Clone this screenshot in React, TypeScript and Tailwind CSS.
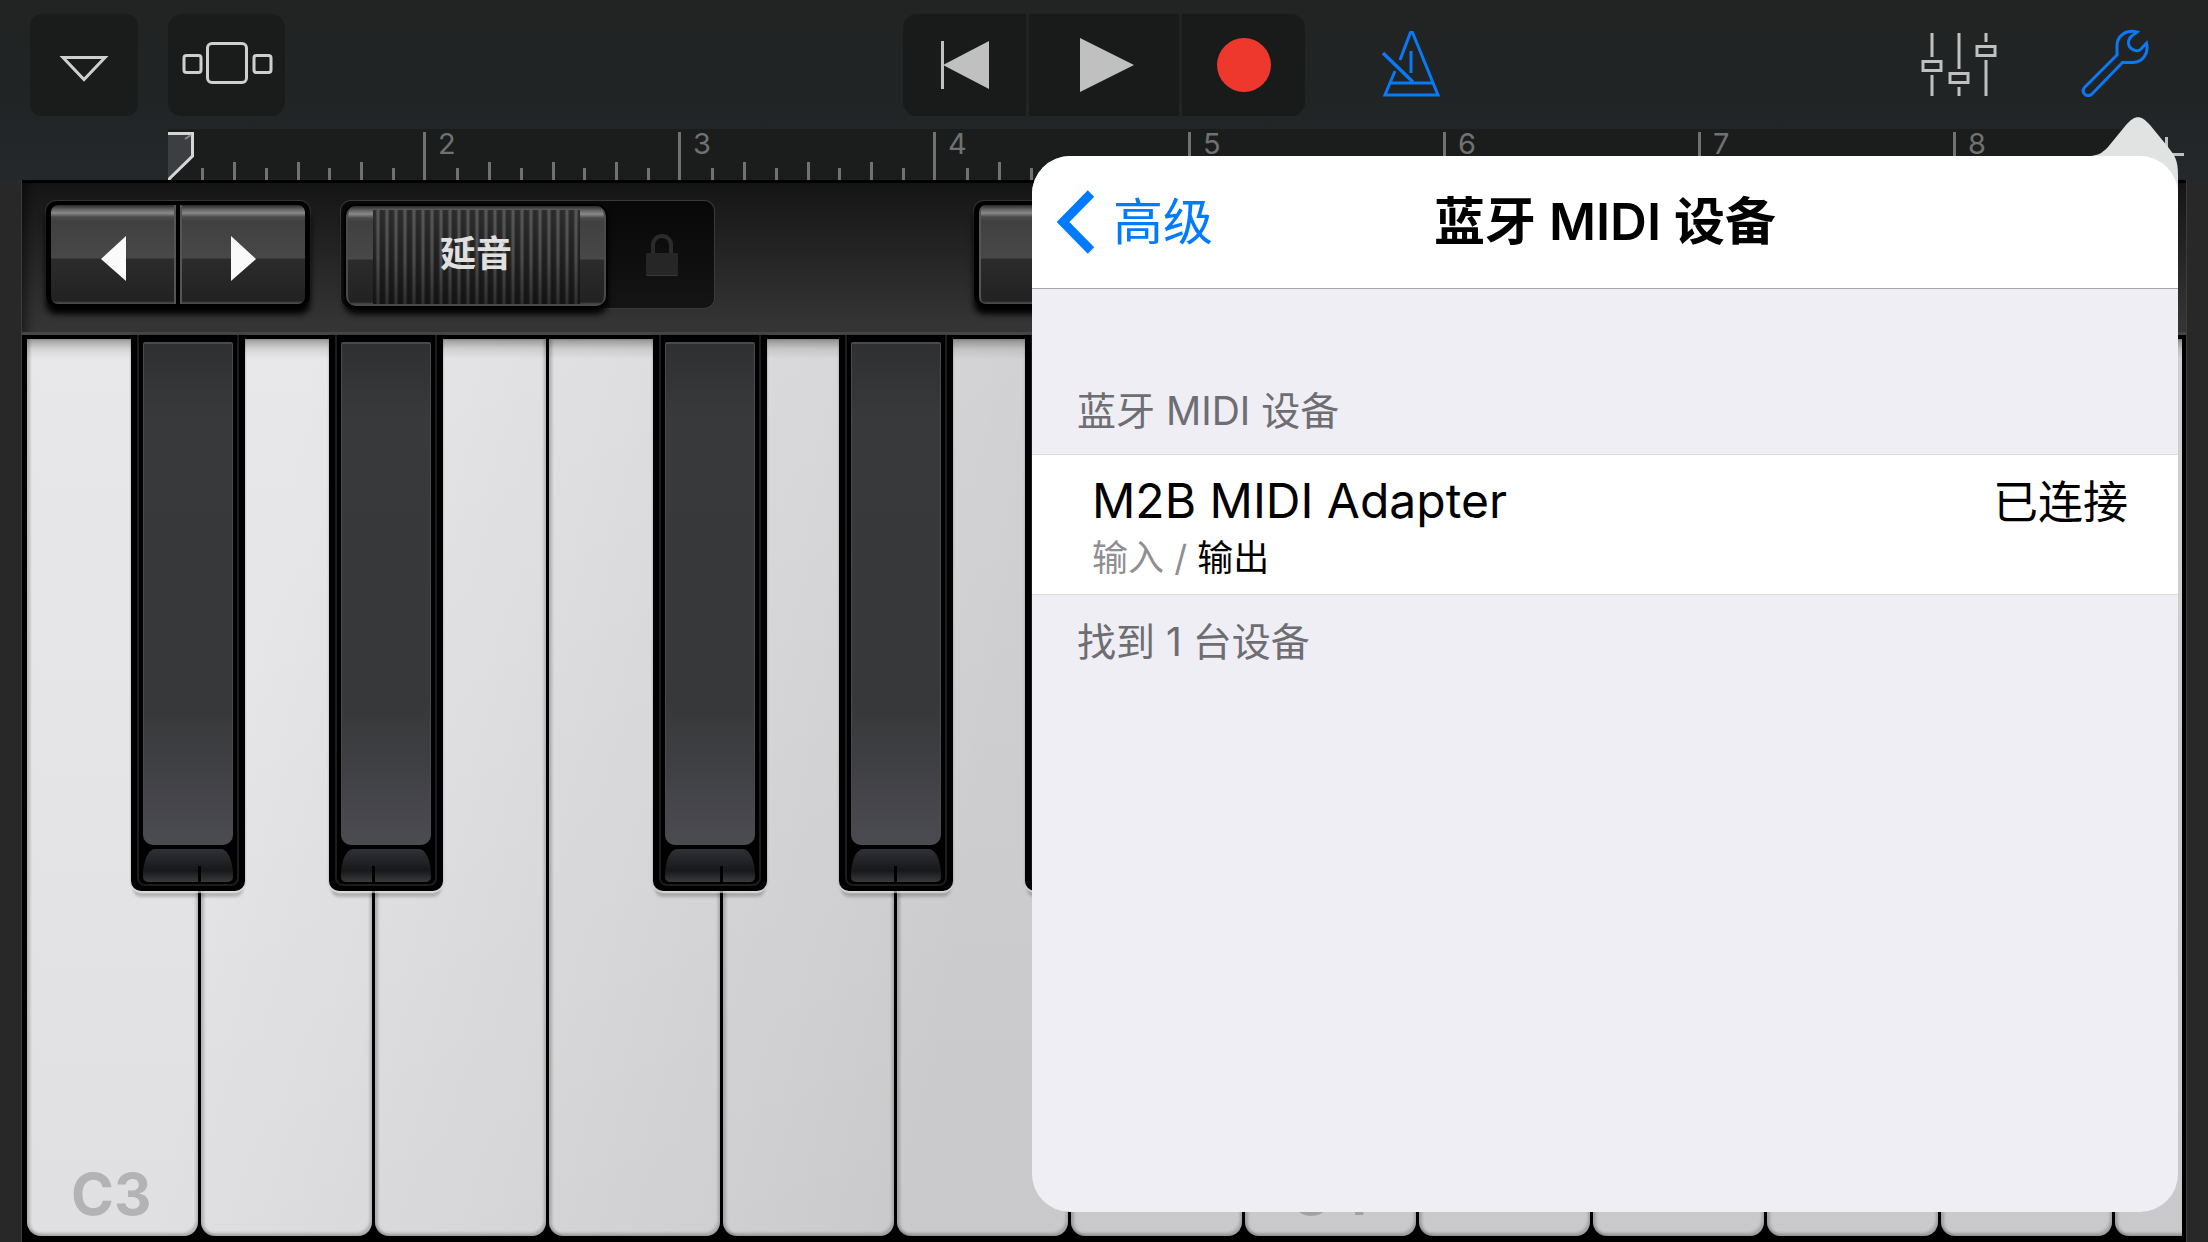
import React from "react";

const FONT = "font-['Inter','Noto_Sans_CJK_SC',sans-serif]";

type BlackKeySpec = { place: string; seam: string };
type KeySpec = { note: string; label?: string; black?: BlackKeySpec };

const LEFT_BLACK: BlackKeySpec = { place: "left-[104px]", seam: "left-[55px]" };
const MIDDLE_BLACK: BlackKeySpec = { place: "left-[116px]", seam: "left-[43px]" };
const RIGHT_BLACK: BlackKeySpec = { place: "left-[128px]", seam: "left-[31px]" };

const KEYS: KeySpec[] = [
  { note: "C3", label: "C3", black: LEFT_BLACK },
  { note: "D3", black: RIGHT_BLACK },
  { note: "E3" },
  { note: "F3", black: LEFT_BLACK },
  { note: "G3", black: MIDDLE_BLACK },
  { note: "A3", black: RIGHT_BLACK },
  { note: "B3" },
  { note: "C4", label: "C4", black: LEFT_BLACK },
  { note: "D4", black: RIGHT_BLACK },
  { note: "E4" },
  { note: "F4", black: LEFT_BLACK },
  { note: "G4", black: MIDDLE_BLACK },
  { note: "A4" },
];

const BARS = [1, 2, 3, 4, 5, 6, 7, 8];
const SUB_TICKS = [1, 2, 3, 4, 5, 6, 7];

function Toolbar() {
  return (
    <header className="grid h-[129px] grid-cols-[1fr_auto_1fr] items-start pt-[14px]">
      <div className="flex gap-[30px] pl-[30px]">
        <button aria-label="菜单" className="grid h-[102px] w-[108px] place-items-center rounded-[12px] bg-[#1a1c1b]">
          <svg width="50" height="28" viewBox="0 0 50 28" className="mt-2" fill="none" stroke="#cfcfcf" strokeWidth="3">
            <path d="M4 2.500H46L25 24.500Z" />
          </svg>
        </button>
        <button aria-label="浏览器" className="grid h-[102px] w-[117px] place-items-center rounded-[14px] bg-[#1a1c1b]">
          <svg width="91" height="42" viewBox="0 0 91 42" className="-mt-1 ml-px" fill="none" stroke="#cfcfcf" strokeWidth="3">
            <rect x="2" y="13.500" width="17" height="17" rx="2.500" />
            <rect x="25.500" y="1.500" width="39" height="39" rx="4.500" />
            <rect x="72" y="13.500" width="17" height="17" rx="2.500" />
          </svg>
        </button>
      </div>
      <div className="flex gap-[3px] overflow-hidden rounded-[14px]">
        <button aria-label="回到开头" className="grid h-[102px] w-[123px] place-items-center bg-[#191b1a]">
          <svg width="48" height="48" viewBox="0 0 48 48" fill="#c0c0c0">
            <rect width="3" height="48" />
            <path d="M48 0V48L2 24Z" />
          </svg>
        </button>
        <button aria-label="播放" className="grid h-[102px] w-[150px] place-items-center bg-[#191b1a] pl-[6px]">
          <svg width="54" height="54" viewBox="0 0 54 54" fill="#c0c0c0">
            <path d="M0 0V54L54 27Z" />
          </svg>
        </button>
        <button aria-label="录音" className="grid h-[102px] w-[123px] place-items-center bg-[#191b1a]">
          <span className="size-[54px] rounded-full bg-[#ee382e]" />
        </button>
      </div>
      <div className="flex justify-between pr-[59px] pl-[76px]">
        <button aria-label="节拍器" className="grid h-[102px] w-[60px] place-items-center">
          <svg width="60" height="68" viewBox="0 0 60 68" className="-mt-1" fill="none" stroke="#0a79f6" strokeWidth="3">
            <path d="M19 31L29.500 3.500H31.500L57 66H4L14 42" />
            <path d="M2 24L32 53" strokeWidth="3.500" />
            <path d="M30 22V44" />
            <path d="M10 54H51" />
          </svg>
        </button>
        <div className="flex gap-[84px]">
          <button aria-label="轨道控制" className="grid h-[102px] w-[76px] place-items-center">
            <svg width="76" height="64" viewBox="0 0 76 64" fill="none" stroke="#c0c0c0" strokeWidth="3">
              <path d="M11 0V24M11 42V63M38 0V36M38 54V63M65 0V9M65 27V63" />
              <rect x="2" y="28.500" width="18" height="9" />
              <rect x="29" y="40.500" width="18" height="9" />
              <rect x="56" y="13.500" width="18" height="9" />
            </svg>
          </button>
          <button aria-label="设置" className="grid h-[102px] w-[68px] place-items-center">
            <svg width="68" height="68" viewBox="0 0 68 68" className="-mt-1" fill="none" stroke="#0a79f6" strokeWidth="3">
              <path d="M56 3C45 0 35.500 7 36 18L36 26L3.500 58.500C-0.500 64 6 69 11 65L41.500 33.500H52C62 33 68 24 65.500 14L60 20C56 24 47 20 47.500 13C48 8 51 7 56 3Z" />
            </svg>
          </button>
        </div>
      </div>
    </header>
  );
}

function Ruler() {
  return (
    <div className="flex h-[51px] pr-[24px] pl-[168px]">
      <div className="relative flex min-w-0 flex-1 items-end overflow-x-clip bg-[#1b1d1d]">
        {BARS.map((bar) => (
          <div key={bar} className="relative grid h-[48px] w-[255px] shrink-0 grid-cols-8 items-end">
            <span className="h-full w-[3px] bg-[#707271]" />
            {SUB_TICKS.map((tick) => (
              <span
                key={tick}
                className={tick % 2 ? "ml-px h-[12px] w-[3px] bg-[#707271]" : "ml-px h-[18px] w-[3px] bg-[#707271]"}
              />
            ))}
            <span className="absolute -top-[6px] left-[15px] text-[29px] leading-[36px] text-[#707271]">{bar}</span>
          </div>
        ))}
        <svg width="28" height="48" viewBox="0 0 28 48" className="absolute bottom-0 left-0">
          <path d="M-2 1.500H24.500V24L0 48" fill="#3d3e41" stroke="#d6d6d4" strokeWidth="3" />
          <path d="M17 7L23 3" stroke="#8c8e8c" strokeWidth="2" />
        </svg>
      </div>
      <button aria-label="添加段落" className="grid w-[51px] place-items-center pl-4">
        <svg width="35" height="35" viewBox="0 0 35 35" stroke="#c0c2c1" strokeWidth="3">
          <path d="M17.500 0V35M0 17.500H35" />
        </svg>
      </button>
    </div>
  );
}

const GLOSS =
  "bg-[linear-gradient(180deg,#2a2a2a_0px,#6a6a6a_5px,#8a8a8a_8px,#4a4a4a_12px,#404040_16px,#484848_53px,#2b2b2b_54px,#222222_96px,#4a4a4a_98px)]";

function Lock() {
  return (
    <svg width="32" height="44" viewBox="0 0 32 44" fill="none">
      <path d="M7 22V12a9 9 0 0 1 18 0V22" stroke="#2b2b2b" strokeWidth="4" />
      <rect y="20" width="32" height="23" rx="1" fill="#262626" />
      <path d="M1 42.500H31" stroke="#3a3a3a" />
    </svg>
  );
}

function ControlStrip() {
  return (
    <div className="flex h-[155px] items-start overflow-x-clip border-t-[3px] border-b-[3px] border-t-black border-b-[#464646] bg-[linear-gradient(180deg,#151515,#242424_45%,#363636)] pt-[18px] pl-[24px] shadow-[inset_12px_0_12px_-8px_#0008]">
      <div className="flex h-[105px] w-[264px] shrink-0 gap-[4px] rounded-[10px] bg-black px-[5px] pt-[4px] pb-[2px] shadow-[0_8px_6px_#000,0_0_0_1px_#333]">
        <button aria-label="低八度" className={`grid flex-1 place-items-center rounded-l-[7px] border-r-2 border-[#555] ${GLOSS}`}>
          <svg width="26" height="46" viewBox="0 0 26 46" className="mt-2" fill="#fafafa">
            <path d="M26 0V45L1 23Z" />
          </svg>
        </button>
        <button aria-label="高八度" className={`grid flex-1 place-items-center rounded-r-[7px] border-l-2 border-[#555] ${GLOSS}`}>
          <svg width="26" height="46" viewBox="0 0 26 46" className="mt-2" fill="#fafafa">
            <path d="M0 0V45L25 23Z" />
          </svg>
        </button>
      </div>

      <label className="ml-[31px] flex h-[107px] w-[373px] shrink-0 items-start rounded-[10px] bg-[linear-gradient(180deg,#080808,#141414)] pt-[5px] pl-[5px] shadow-[0_0_0_1px_#3a3a3a]">
        <input type="checkbox" role="switch" className="sr-only" aria-label="延音锁定" />
        <span className={`flex h-[100px] w-[260px] justify-center rounded-[10px] border-x-2 border-[#4a4a4a] shadow-[0_6px_6px_2px_#000,0_0_0_2px_#000] ${GLOSS}`}>
          <span className="mt-[4px] h-[94px] w-[207px] bg-[linear-gradient(180deg,#ffffff10,#0000_50%,#00000066),repeating-linear-gradient(90deg,#1d1d1d_0px,#262626_3px,#4c4c4c_4px,#4c4c4c_6px,#242424_7px,#1d1d1d_9px)] pt-[20px] text-center text-[36px] leading-[48px] font-bold text-[#e0e0e0]">
            延音
          </span>
        </span>
        <span className="flex flex-1 justify-center pt-[27px] pl-[4px]">
          <Lock />
        </span>
      </label>

      <div className="ml-[260px] flex h-[105px] w-[264px] shrink-0 rounded-[10px] bg-black px-[5px] pt-[4px] pb-[2px] shadow-[0_8px_6px_#000,0_0_0_1px_#333]">
        <button aria-label="键盘布局" className={`flex-1 rounded-[7px] border-x-2 border-[#555] ${GLOSS}`} />
      </div>
    </div>
  );
}

function BlackKey({ place, seam }: BlackKeySpec) {
  return (
    <button
      aria-label="黑键"
      className={`absolute -top-[4px] z-20 flex h-[62%] w-[114px] flex-col rounded-b-[10px] bg-black px-[6px] pb-[5px] shadow-[0_2px_1px_#fff9,0_8px_3px_-2px_#0003,0_0_2px_#0006] ${place}`}
    >
      <span className="flex w-full flex-1 flex-col gap-[4px] rounded-b-[8px] border-x-2 border-b-2 border-[#1c1c1e] bg-black px-[4px] pt-[7px] pb-[2px]">
        <span className="w-full flex-1 rounded-t-[2px] rounded-b-[10px] border-x border-t-2 border-[#4a4a50] bg-[linear-gradient(180deg,#2e3032,#38393a_15%,#373839_72%,#4b4b52)]" />
        <span className="relative h-[33px] w-full rounded-[12px_12px_5px_5px/26px_26px_5px_5px] bg-[linear-gradient(180deg,#303138,#17181a_65%,#3a3a3a)]">
          <span className={`absolute bottom-0 h-[16px] w-[3px] bg-black ${seam}`} />
        </span>
      </span>
    </button>
  );
}

function Keyboard() {
  return (
    <div className="flex flex-1 bg-black pt-[4px] pr-[4px] pb-[6px] pl-[5px]">
      <div className="relative flex min-w-0 flex-1 gap-[3px] overflow-x-clip">
        {KEYS.map((key) => (
          <div key={key.note} className="relative w-[171px] shrink-0">
            <button
              aria-label={key.note}
              className="flex h-full w-full items-end rounded-b-[14px] bg-[linear-gradient(180deg,#9c9c9d_0px,#d4d4d5_10px,#e8e8ea_20px,#e0e0e2)] px-[44px] pb-[7px] shadow-[inset_3px_0_3px_#0003,inset_-2px_-3px_3px_#0003]"
            >
              {key.label && <span className="text-[58px] leading-[70px] font-bold text-[#b3b3b5]">{key.label}</span>}
            </button>
            {key.black && <BlackKey {...key.black} />}
          </div>
        ))}
        <div className="pointer-events-none absolute inset-0 z-10 bg-[linear-gradient(100deg,#0000_12%,#0000001a_45%,#0000001a)]" />
      </div>
    </div>
  );
}

function DevicePopover() {
  return (
    <section aria-label="蓝牙 MIDI 设备" className="absolute top-[156px] right-[30px] bottom-[30px] z-30 w-[1146px] max-w-full">
      <svg width="94" height="84" viewBox="0 0 94 84" className="absolute -top-[39px] right-0" fill="#e1e3e2">
        <path d="M0 39.500C14 39 17 37 24 30L42 8C51 -2.500 57 -2.500 66 8L84 30C91 39 94 43 94 58V84H0Z" />
      </svg>
      <div className="relative flex h-full flex-col overflow-hidden rounded-[38px] bg-[#efeef4] text-black">
        <div className="grid h-[133px] shrink-0 grid-cols-[1fr_auto_1fr] items-center border-b border-[#a7a7aa] bg-white">
          <button className="flex items-center gap-[18px] justify-self-start pl-[24px] text-[50px] leading-[60px] text-[#007aff]">
            <svg width="39" height="64" viewBox="0 0 39 64" fill="none" stroke="#007aff" strokeWidth="9">
              <path d="M35 3.500L7 32L35 60.500" />
            </svg>
            高级
          </button>
          <h1 className="text-[51px] leading-[60px] font-semibold">蓝牙 MIDI 设备</h1>
        </div>
        <h2 className="px-[45px] pt-[97px] pb-[19px] text-[39px] leading-[49px] text-[#6d6d72]">蓝牙 MIDI 设备</h2>
        <button className="flex h-[141px] shrink-0 items-start justify-between border-y border-[#dcdcde] bg-white pt-[14px] pr-[50px] pl-[60px] text-left">
          <span className="flex flex-col">
            <span className="text-[48px] leading-[64px]">M2B MIDI Adapter</span>
            <span className="text-[36px] leading-[50px]">
              <span className="text-[#8e8e93]">输入 / </span>输出
            </span>
          </span>
          <span className="text-[45px] leading-[67px]">已连接</span>
        </button>
        <p className="px-[45px] pt-[22px] text-[39px] leading-[49px] text-[#6d6d72]">找到 1 台设备</p>
      </div>
    </section>
  );
}

export default function App() {
  return (
    <main className={`relative flex min-h-screen w-full flex-col overflow-hidden bg-[#282828] ${FONT}`}>
      <div className="bg-[linear-gradient(180deg,#222423,#212425_50%,#24282a)]">
        <Toolbar />
        <Ruler />
      </div>
      <div className="mx-[21px] flex flex-1 flex-col border-x border-[#3c3c3c]">
        <ControlStrip />
        <Keyboard />
      </div>
      <DevicePopover />
    </main>
  );
}
